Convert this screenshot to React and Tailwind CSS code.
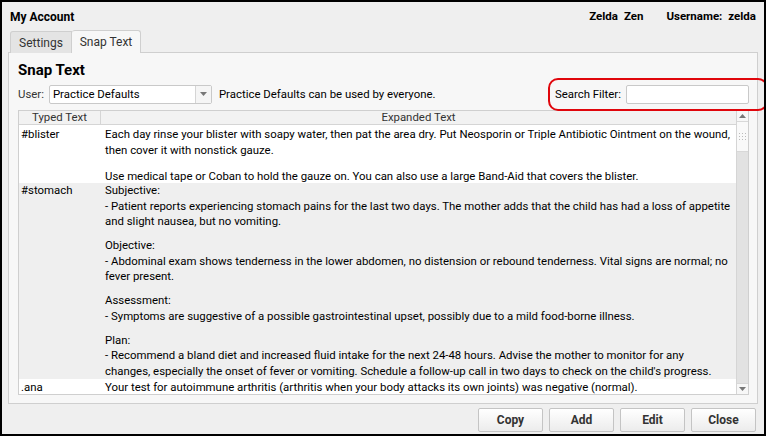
import React from "react";

const Line = ({ children, h = 16 }) => (
  <div className="whitespace-nowrap" style={{ height: h, lineHeight: `${h}px` }}>{children}</div>
);
const Gap = ({ h = 8 }) => <div style={{ height: h }} />;

function ScrollArrow({ down }) {
  return (
    <svg width="7" height="5" viewBox="0 0 7 5">
      {down ? (
        <polygon points="0,0 7,0 3.5,4" fill="#777" />
      ) : (
        <polygon points="0,4 7,4 3.5,0" fill="#777" />
      )}
    </svg>
  );
}

export default function App() {
  const S = 15.5;
  return (
    <div
      className="w-[766px] h-[436px] border-2 border-black bg-[#efefef] relative box-border text-[11.4px] text-[#222] overflow-hidden"
      style={{ fontFamily: "Roboto, 'Noto Sans', sans-serif" }}
    >
      {/* header */}
      <div className="h-[28px] flex items-center justify-between pl-[8px] pr-[8px] pt-[2px]">
        <div className="font-bold text-[12px] text-black">My Account</div>
        <div className="flex font-bold text-[11.5px] text-black">
          <span>Zelda</span>
          <span className="ml-[6px]">Zen</span>
          <span className="ml-[23px]">Username:</span>
          <span className="ml-[6px]">zelda</span>
        </div>
      </div>

      {/* tabs */}
      <div className="flex items-end ml-[8px] h-[23px] relative z-10">
        <div className="h-[22px] w-[62px] flex items-center justify-center bg-[#e4e4e4] border border-[#cfcfcf] border-b-0 rounded-tl-[3px] text-[#333] text-[12px]">
          Settings
        </div>
        <div className="h-[23px] w-[69px] flex items-center justify-center bg-[#f7f7f7] border border-[#cfcfcf] border-b-0 border-l-0 rounded-t-[3px] text-[#333] text-[12px]">
          Snap Text
        </div>
      </div>

      {/* panel */}
      <div className="ml-[6px] w-[750px] h-[352px] -mt-[1px] border border-[#cfcfcf] bg-[#f7f7f7] pl-[9px] pr-[7px] box-border">
        <div className="h-[31px] flex items-center font-bold text-[15px] text-black pt-[4px]">
          Snap Text
        </div>
        <div className="h-[21px] flex items-center">
          <span className="text-[#333] mr-[5px]">User:</span>
          <div className="w-[163px] h-[19px] bg-white border border-[#c9c9c9] rounded-[2px] flex items-stretch">
            <div className="flex-1 flex items-center pl-[3px] text-black">Practice Defaults</div>
            <div className="w-[16px] border-l border-[#d5d5d5] flex items-center justify-center bg-[#f5f5f5]">
              <ScrollArrow down />
            </div>
          </div>
          <span className="ml-[7px] text-black">Practice Defaults can be used by everyone.</span>
          <div className="flex-1" />
          <span className="text-black mr-[5px]">Search Filter:</span>
          <div className="w-[123px] h-[19px] bg-white border border-[#c9c9c9] rounded-[2px] mr-[1px]" />
        </div>

        {/* table */}
        <div className="mt-[5px] w-[731px] h-[285px] border border-[#cfcfcf] bg-white flex">
          <div className="flex-1 flex flex-col min-w-0 overflow-hidden">
            <div className="h-[14px] shrink-0 flex bg-[#f2f2f2] border-b border-[#d5d5d5] text-[#333] leading-[13px]">
              <div className="w-[82px] shrink-0 text-center border-r border-[#d5d5d5]">Typed Text</div>
              <div className="flex-1 text-center">Expanded Text</div>
            </div>
            <div className="flex h-[58px] shrink-0 bg-white text-black">
              <div className="w-[82px] shrink-0 pl-[2px] pt-[1px]">
                <Line>#blister</Line>
              </div>
              <div className="flex-1 min-w-0 pl-[4px] pt-[1px]">
                <Line>Each day rinse your blister with soapy water, then pat the area dry. Put Neosporin or Triple Antibiotic Ointment on the wound,</Line>
                <Line>then cover it with nonstick gauze.</Line>
                <Gap h={10} />
                <Line>Use medical tape or Coban to hold the gauze on. You can also use a large Band-Aid that covers the blister.</Line>
              </div>
            </div>
            <div className="flex h-[196px] shrink-0 bg-[#efefef] text-black">
              <div className="w-[82px] shrink-0 pl-[2px]">
                <Line h={S}>#stomach</Line>
              </div>
              <div className="flex-1 min-w-0 pl-[4px]">
                <Line h={S}>Subjective:</Line>
                <Line h={S}>- Patient reports experiencing stomach pains for the last two days. The mother adds that the child has had a loss of appetite</Line>
                <Line h={S}>and slight nausea, but no vomiting.</Line>
                <Gap h={8.5} />
                <Line h={S}>Objective:</Line>
                <Line h={S}>- Abdominal exam shows tenderness in the lower abdomen, no distension or rebound tenderness. Vital signs are normal; no</Line>
                <Line h={S}>fever present.</Line>
                <Gap h={8.5} />
                <Line h={S}>Assessment:</Line>
                <Line h={S}>- Symptoms are suggestive of a possible gastrointestinal upset, possibly due to a mild food-borne illness.</Line>
                <Gap h={8.5} />
                <Line h={S}>Plan:</Line>
                <Line h={S}>- Recommend a bland diet and increased fluid intake for the next 24-48 hours. Advise the mother to monitor for any</Line>
                <Line h={S}>changes, especially the onset of fever or vomiting. Schedule a follow-up call in two days to check on the child's progress.</Line>
              </div>
            </div>
            <div className="flex h-[16px] shrink-0 bg-white text-black pt-[1px]">
              <div className="w-[82px] shrink-0 pl-[2px]">
                <Line h={15}>.ana</Line>
              </div>
              <div className="flex-1 min-w-0 pl-[4px]">
                <Line h={15}>Your test for autoimmune arthritis (arthritis when your body attacks its own joints) was negative (normal).</Line>
              </div>
            </div>
          </div>
          {/* scrollbar */}
          <div className="w-[12px] shrink-0 border-l border-[#d5d5d5] bg-[#e2e2e2] flex flex-col">
            <div className="h-[10px] bg-[#f7f7f7] flex items-center justify-center">
              <ScrollArrow />
            </div>
            <div className="h-[31px] bg-[#f9f9f9] border-y border-[#d8d8d8] flex items-center justify-center">
              <div className="grid grid-cols-3 gap-[2px]">
                {Array.from({ length: 9 }).map((_, i) => (
                  <div key={i} className="w-[1px] h-[1px] bg-[#bbb]" />
                ))}
              </div>
            </div>
            <div className="flex-1" />
            <div className="h-[11px] bg-[#f7f7f7] border-t border-[#d8d8d8] flex items-center justify-center">
              <ScrollArrow down />
            </div>
          </div>
        </div>
      </div>

      {/* buttons */}
      <div className="flex justify-end gap-[6px] pr-[8px] mt-[4px]">
        {["Copy", "Add", "Edit", "Close"].map((b) => (
          <div
            key={b}
            className="w-[65px] h-[24px] flex items-center justify-center font-bold text-[12px] text-[#333] border border-[#c4c4c4] rounded-[2px] bg-gradient-to-b from-white to-[#ececec]"
          >
            {b}
          </div>
        ))}
      </div>

      {/* annotation */}
      <div className="absolute left-[546px] top-[76px] w-[220px] h-[33px] border-[2.5px] border-[#e0060c] rounded-[10px] pointer-events-none" />
    </div>
  );
}
